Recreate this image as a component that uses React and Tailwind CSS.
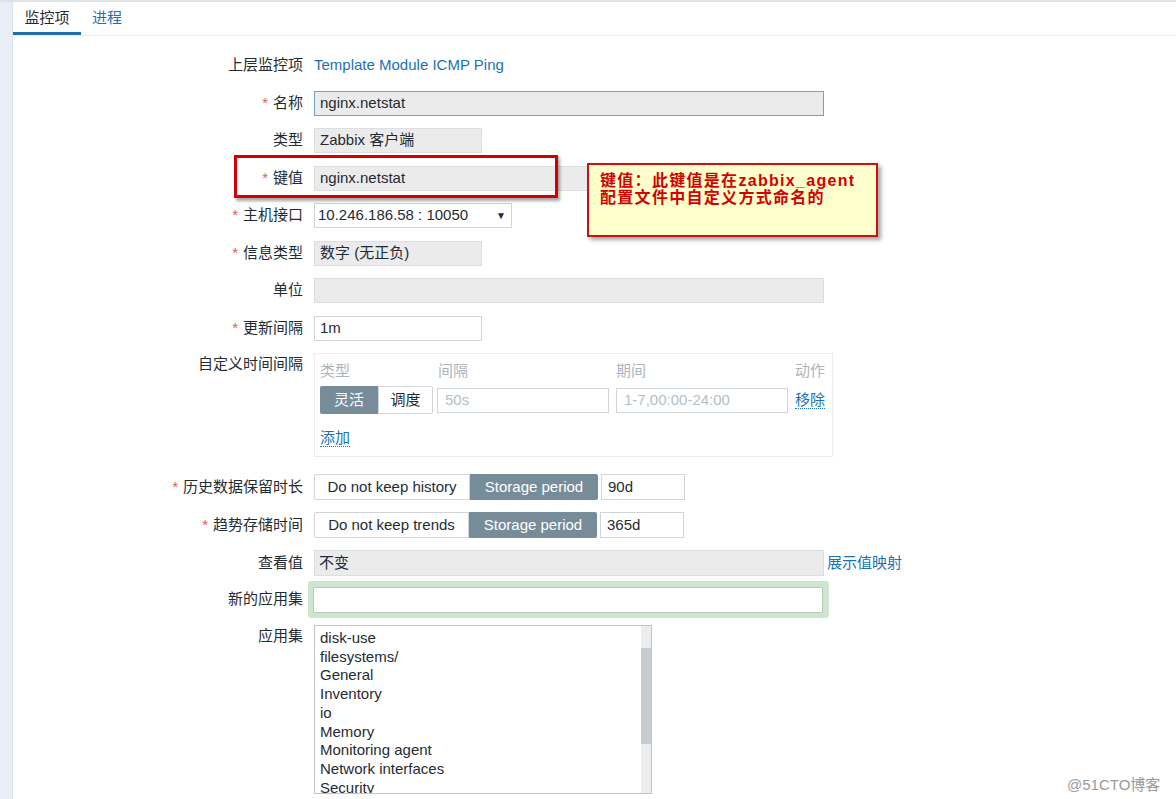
import React from 'react';

const font = { fontFamily: '"Liberation Sans", Arial, "Noto Sans CJK SC", sans-serif' };

const Label = ({ required, children }) => (
    <div className="w-[290px] shrink-0 text-right text-[15px] text-[#1f2c33]">
        {required && <span className="text-[#e45959] mr-[5px]">*</span>}
        {children}
    </div>
);

const Row = ({ label, required, className = '', children, align = 'items-center' }) => (
    <div className={`flex ${align} gap-[11px] ${className}`}>
        <Label required={required}>{label}</Label>
        <div className="flex items-center flex-1">{children}</div>
    </div>
);

const ReadOnly = ({ w, children }) => (
    <div className={`${w} h-[25px] bg-[#ebebeb] border border-[#dcdfe1] px-[5px] flex items-center text-[15px] text-[#1f2c33]`}>
        {children}
    </div>
);

const apps = ['disk-use', 'filesystems/', 'General', 'Inventory', 'io', 'Memory', 'Monitoring agent', 'Network interfaces', 'Security'];

const App = () => {
    return (
        <div className="relative h-[799px] overflow-hidden bg-[#e9edf5] border-t-2 border-[#dfe3e8]" style={font}>
            <div className="ml-[12px] h-full bg-white border-l border-[#dce3ea]">
                {/* Tabs */}
                <div className="flex h-[34px] border-b border-[#ebeef0]">
                    <div className="w-[68px] text-center text-[15px] text-[#1f2c33] leading-[31px] border-b-[3px] border-[#1f6ea8]">监控项</div>
                    <div className="px-[11px] text-[15px] text-[#1b72b3] leading-[31px]">进程</div>
                </div>

                {/* Form */}
                <div className="flex flex-col pt-[17px]">
                    <Row label="上层监控项" className="h-[25px]">
                        <span className="text-[15px] text-[#1b72b3]">Template Module ICMP Ping</span>
                    </Row>
                    <Row label="名称" required className="h-[25px] mt-[12.5px]">
                        <div className="w-[510px] h-[25px] border border-[#6fa3c9] bg-[#ebebeb] px-[5px] flex items-center text-[15px] text-[#1f2c33]">nginx.netstat</div>
                    </Row>
                    <Row label="类型" className="h-[25px] mt-[12.5px]">
                        <ReadOnly w="w-[168px]">Zabbix 客户端</ReadOnly>
                    </Row>
                    <Row label="键值" required className="h-[25px] mt-[12.5px]">
                        <ReadOnly w="w-[510px]">nginx.netstat</ReadOnly>
                    </Row>
                    <Row label="主机接口" required className="h-[25px] mt-[12.5px]">
                        <div className="w-[198px] h-[25px] border border-[#cfd5d8] bg-white px-[3px] flex items-center justify-between text-[15px] text-[#1f2c33]">
                            <span>10.246.186.58 : 10050</span>
                            <span className="text-[10px] mr-[2px]">▼</span>
                        </div>
                    </Row>
                    <Row label="信息类型" required className="h-[25px] mt-[12.5px]">
                        <ReadOnly w="w-[168px]">数字 (无正负)</ReadOnly>
                    </Row>
                    <Row label="单位" className="h-[25px] mt-[12.5px]">
                        <ReadOnly w="w-[510px]"></ReadOnly>
                    </Row>
                    <Row label="更新间隔" required className="h-[25px] mt-[12.5px]">
                        <div className="w-[168px] h-[25px] border border-[#cfd5d8] bg-white px-[5px] flex items-center text-[15px] text-[#1f2c33]">1m</div>
                    </Row>

                    {/* Custom intervals */}
                    <Row label="自定义时间间隔" className="mt-[12.5px]" align="items-start">
                        <div className="w-[519px] h-[104px] border border-[#ebeef0] px-[5px] pt-[8px]">
                            <div className="flex text-[15px] text-[#acb5bb] h-[18px] items-center">
                                <span className="w-[118px]">类型</span>
                                <span className="w-[178px]">间隔</span>
                                <span className="w-[179px]">期间</span>
                                <span>动作</span>
                            </div>
                            <div className="flex items-center mt-[6px] h-[28px]">
                                <div className="flex h-[28px]">
                                    <div className="w-[58px] bg-[#768d99] text-white text-[15px] flex items-center justify-center rounded-l-[2px]">灵活</div>
                                    <div className="w-[55px] border border-[#cfd5d8] bg-white text-[#1f2c33] text-[15px] flex items-center justify-center rounded-r-[2px]">调度</div>
                                </div>
                                <div className="ml-[4px] w-[172px] h-[25px] border border-[#cfd5d8] px-[7px] flex items-center text-[15px] text-[#b4bfc5]">50s</div>
                                <div className="ml-[7px] w-[172px] h-[25px] border border-[#cfd5d8] px-[7px] flex items-center text-[15px] text-[#b4bfc5]">1-7,00:00-24:00</div>
                                <span className="ml-[7px] text-[15px] text-[#1b72b3] border-b border-dotted border-[#1b72b3] leading-[17px]">移除</span>
                            </div>
                            <div className="mt-[12px]">
                                <span className="text-[15px] text-[#1b72b3] border-b border-dotted border-[#1b72b3] leading-[17px]">添加</span>
                            </div>
                        </div>
                    </Row>

                    <Row label="历史数据保留时长" required className="h-[26px] mt-[17px]">
                        <div className="flex h-[26px]">
                            <div className="w-[156px] border border-[#cfd5d8] bg-white text-[15px] text-[#1f2c33] flex items-center justify-center rounded-l-[2px]">Do not keep history</div>
                            <div className="w-[128px] bg-[#768d99] text-[15px] text-white flex items-center justify-center rounded-r-[2px]">Storage period</div>
                        </div>
                        <div className="ml-[3px] w-[84px] h-[26px] border border-[#cfd5d8] bg-white px-[6px] flex items-center text-[15px] text-[#1f2c33]">90d</div>
                    </Row>
                    <Row label="趋势存储时间" required className="h-[26px] mt-[12px]">
                        <div className="flex h-[26px]">
                            <div className="w-[155px] border border-[#cfd5d8] bg-white text-[15px] text-[#1f2c33] flex items-center justify-center rounded-l-[2px]">Do not keep trends</div>
                            <div className="w-[128px] bg-[#768d99] text-[15px] text-white flex items-center justify-center rounded-r-[2px]">Storage period</div>
                        </div>
                        <div className="ml-[3px] w-[84px] h-[26px] border border-[#cfd5d8] bg-white px-[6px] flex items-center text-[15px] text-[#1f2c33]">365d</div>
                    </Row>
                    <Row label="查看值" className="h-[26px] mt-[12px]">
                        <div className="w-[510px] h-[26px] bg-[#ebebeb] border border-[#dcdfe1] px-[4px] flex items-center text-[15px] text-[#1f2c33]">不变</div>
                        <span className="ml-[3px] text-[15px] text-[#1b72b3]">展示值映射</span>
                    </Row>
                    <Row label="新的应用集" className="h-[37px] mt-[5px]">
                        <div className="-ml-[6px] w-[521px] h-[37px] bg-[#cde6cd] rounded-[3px] flex items-center px-[5px]">
                            <div className="w-[510px] h-[26px] bg-white border border-[#b9cbbb]"></div>
                        </div>
                    </Row>
                    <Row label="应用集" className="mt-[7px]" align="items-start">
                        <div className="w-[338px] h-[169px] border border-[#bfc6ca] bg-white flex overflow-hidden">
                            <div className="flex-1 pl-[5px] pt-[3px] text-[15px] text-[#1f2c33] leading-[18.7px]">
                                {apps.map(a => <div key={a}>{a}</div>)}
                            </div>
                            <div className="w-[10px] bg-[#ececec] pt-[22px]">
                                <div className="h-[96px] bg-[#c7ccd0]"></div>
                            </div>
                        </div>
                    </Row>
                </div>
            </div>

            {/* Red highlight around key field */}
            <div className="absolute left-[234px] top-[153px] w-[324px] h-[43px] border-[3px] border-[#d40000] shadow-[2px_3px_3px_rgba(0,0,0,0.35)]"></div>

            {/* Annotation callout */}
            <div
                className="absolute left-[587px] top-[161px] w-[291px] h-[74px] bg-[#ffffcc] border-2 border-[#cc1111] shadow-[3px_3px_4px_rgba(0,0,0,0.35)] pl-[11px] pt-[7px] text-[16px] font-bold text-[#d40000] leading-[17px] tracking-[1.3px]"
                style={{ fontFamily: '"Liberation Sans", "Noto Sans CJK SC", sans-serif' }}
            >
                <div>键值：此键值是在zabbix_agent</div>
                <div>配置文件中自定义方式命名的</div>
            </div>

            {/* Watermark */}
            <div className="absolute left-[1067px] top-[772px] text-[15px] text-[#9a9a9a]">@51CTO博客</div>
        </div>
    );
};

export default App;
